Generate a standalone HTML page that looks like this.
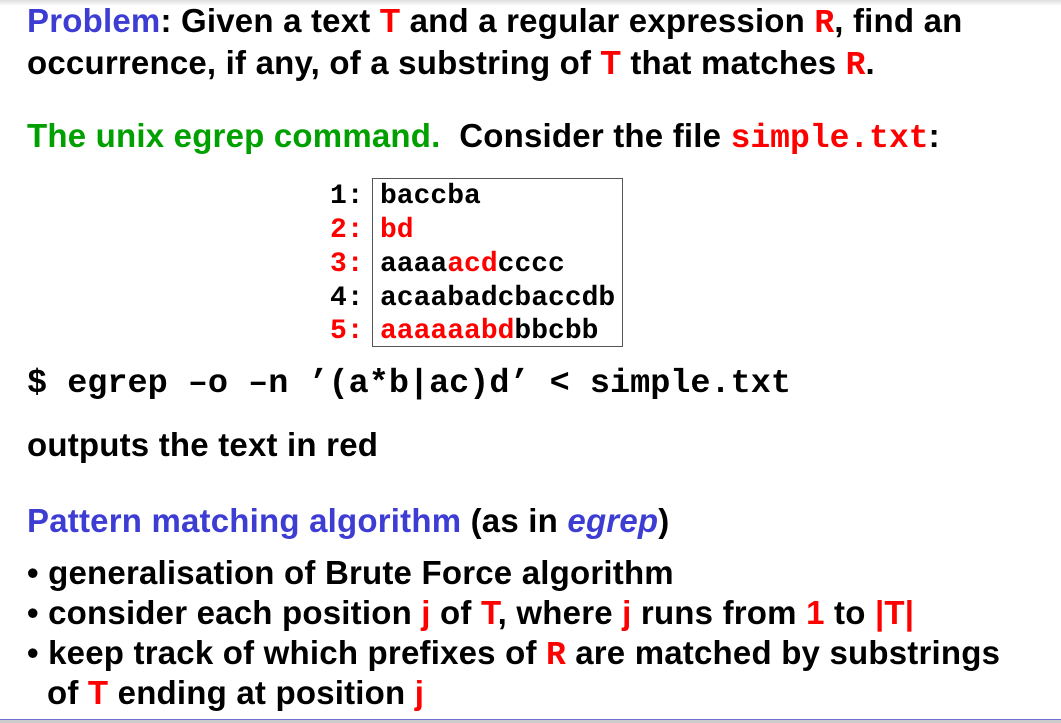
<!DOCTYPE html>
<html><head><meta charset="utf-8"><style>
body{margin:0;width:1061px;height:723px;background:#fff;position:relative;overflow:hidden;font-family:"Liberation Sans",Arial,sans-serif;font-weight:bold;color:#000}
.l{position:absolute;white-space:nowrap;font-size:33px;line-height:1;letter-spacing:0.2px}
.m{font-family:"Liberation Mono","Courier New",monospace;font-weight:bold;letter-spacing:0}
.r{color:#f00}.b{color:#3d3dd4}.g{color:#00a000}
.box{position:absolute;left:372px;top:178px;width:249px;height:167px;border:1px solid #555}
.bl{position:absolute;font-size:28px;line-height:1;white-space:nowrap}
</style></head><body>
<div style="position:absolute;left:0;top:0;width:1061px;height:6px;background:linear-gradient(#ddd,#fff)"></div>
<div class="l" style="left:27px;top:4px"><span class="b">Problem</span>: Given a text <span class="r">T</span> and a regular expression <span class="r m">R</span>, find an</div>
<div class="l" style="left:27px;top:46px">occurrence, if any, of a substring of <span class="r">T</span> that matches <span class="r m">R</span>.</div>
<div class="l" style="left:27px;top:119px"><span class="g">The unix egrep command.</span>&nbsp; Consider the file <span class="r m">simple.txt</span>:</div>
<div class="box"></div>
<div class="bl m" style="left:330px;top:183px">1:</div><div class="bl m" style="left:380px;top:183px">baccba</div>
<div class="bl m r" style="left:330px;top:217px">2:</div><div class="bl m r" style="left:380px;top:217px">bd</div>
<div class="bl m r" style="left:330px;top:251px">3:</div><div class="bl m" style="left:380px;top:251px">aaaa<span class="r">acd</span>cccc</div>
<div class="bl m" style="left:330px;top:285px">4:</div><div class="bl m" style="left:380px;top:285px">acaabadcbaccdb</div>
<div class="bl m r" style="left:330px;top:318px">5:</div><div class="bl m" style="left:380px;top:318px"><span class="r">aaaaaabd</span>bbcbb</div>
<div class="l m" style="left:27px;top:368px;font-size:33.5px">$ egrep –o –n ’(a*b|ac)d’ &lt; simple.txt</div>
<div class="l" style="left:27px;top:428px">outputs the text in red</div>
<div class="l" style="left:27px;top:504px"><span class="b">Pattern matching algorithm</span> (as in <i class="b">egrep</i>)</div>
<div class="l" style="left:27px;top:556px">• generalisation of Brute Force algorithm</div>
<div class="l" style="left:27px;top:596px">• consider each position <span class="r">j</span> of <span class="r">T</span>, where <span class="r">j</span> runs from <span class="r">1</span> to <span class="r">|T|</span></div>
<div class="l" style="left:27px;top:636px">• keep track of which prefixes of <span class="r m">R</span> are matched by substrings</div>
<div class="l" style="left:47px;top:676px">of <span class="r">T</span> ending at position <span class="r">j</span></div>
<div style="position:absolute;left:0;top:719px;width:1061px;height:1px;background:#7070d0"></div>
<div style="position:absolute;left:0;top:720px;width:1061px;height:3px;background:#ccc"></div>
</body></html>
